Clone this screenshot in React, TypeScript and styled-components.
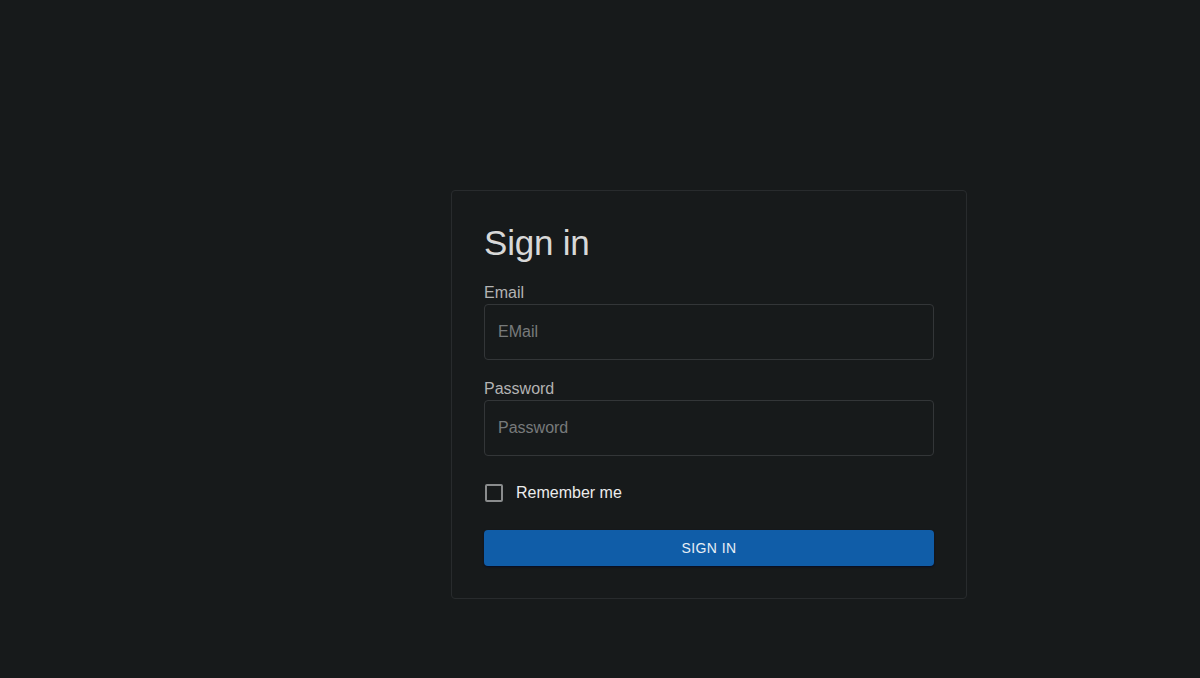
import React from "react";
import styled, { createGlobalStyle } from "styled-components";

const Global = createGlobalStyle`
  html, body { margin: 0; padding: 0; background: #171a1b; }
  body { font-family: "Liberation Sans", Arial, sans-serif; }
  * { box-sizing: border-box; }
`;

const Page = styled.main`
  width: 1200px;
  height: 678px;
  background: #171a1b;
  display: flex;
  align-items: flex-start;
  padding: 190px 0 0 451px;
`;

const Card = styled.form`
  width: 516px;
  height: 409px;
  border: 1px solid #282b2d;
  border-radius: 4px;
  padding: 27px 32px 32px 32px;
  display: flex;
  flex-direction: column;
`;

const Title = styled.h1`
  margin: 0 0 16px 0;
  font-size: 35px;
  font-weight: 400;
  line-height: 50px;
  color: #d8d8d8;
  letter-spacing: -0.2px;
`;

const Field = styled.div<{ $mb: number }>`
  display: flex;
  flex-direction: column;
  margin-bottom: ${(p) => p.$mb}px;
`;

const Label = styled.label`
  font-size: 16px;
  line-height: 18px;
  color: #b3b3b3;
  margin-bottom: 2px;
`;

const Input = styled.input`
  width: 450px;
  height: 56px;
  background: transparent;
  border: 1px solid #333638;
  border-radius: 4px;
  padding: 0 13px;
  font-family: inherit;
  font-size: 16px;
  color: #ddd;
  outline: none;
  &::placeholder { color: #777a7b; }
`;

const CheckRow = styled.label`
  display: flex;
  align-items: center;
  gap: 13px;
  height: 20px;
  margin: 0 0 27px 1px;
  font-size: 16px;
  color: #ececec;
`;

const Box = styled.span`
  width: 18px;
  height: 18px;
  border: 2px solid #8a8c8d;
  border-radius: 2px;
`;

const Button = styled.button`
  width: 450px;
  height: 36px;
  border: none;
  border-radius: 4px;
  background: #105da8;
  color: #e8eef5;
  font-family: inherit;
  font-size: 14px;
  letter-spacing: 0.4px;
  text-transform: uppercase;
  box-shadow: 0 1px 2px rgba(0, 10, 40, 0.8);
`;

export default function App() {
  return (
    <>
      <Global />
      <Page>
        <Card onSubmit={(e) => e.preventDefault()}>
          <Title>Sign in</Title>
          <Field $mb={20}>
            <Label>Email</Label>
            <Input placeholder="EMail" />
          </Field>
          <Field $mb={27}>
            <Label>Password</Label>
            <Input type="password" placeholder="Password" />
          </Field>
          <CheckRow>
            <Box />
            Remember me
          </CheckRow>
          <Button type="submit">Sign in</Button>
        </Card>
      </Page>
    </>
  );
}
